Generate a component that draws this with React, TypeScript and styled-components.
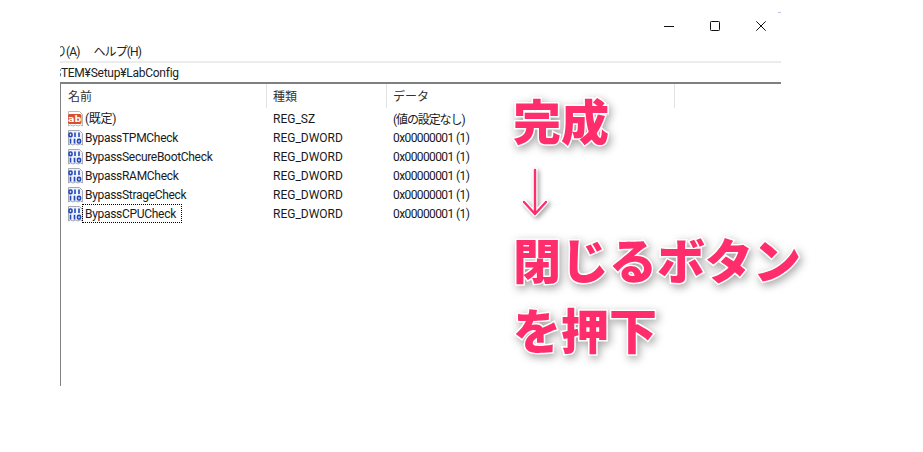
import React from 'react';
import styled, { createGlobalStyle } from 'styled-components';

const GlobalStyle = createGlobalStyle`
  html, body {
    margin: 0;
    padding: 0;
    background: #fff;
  }
`;

const rows = [
  { name: '(既定)', type: 'REG_SZ', data: '(値の設定なし)', kind: 'text' },
  { name: 'BypassTPMCheck', type: 'REG_DWORD', data: '0x00000001 (1)', kind: 'bin' },
  { name: 'BypassSecureBootCheck', type: 'REG_DWORD', data: '0x00000001 (1)', kind: 'bin' },
  { name: 'BypassRAMCheck', type: 'REG_DWORD', data: '0x00000001 (1)', kind: 'bin' },
  { name: 'BypassStrageCheck', type: 'REG_DWORD', data: '0x00000001 (1)', kind: 'bin' },
  { name: 'BypassCPUCheck', type: 'REG_DWORD', data: '0x00000001 (1)', kind: 'bin', focused: true },
];

const TextIcon = () => (
  <svg width="17" height="16" viewBox="0 0 17 16">
    <path d="M1.5 0.5H12.5L15.5 3.5V15L13.5 14L11 15L8.5 14L6 15L3.5 14L1.5 15Z" fill="#fff" stroke="#b8b8b8" />
    <rect x="1" y="3" width="13.5" height="10" rx="1.5" fill="#d8502c" />
    <text x="7.7" y="11.2" textAnchor="middle" fontSize="9.5" fontWeight="700" fontFamily="'DejaVu Sans', sans-serif" fill="#fff">ab</text>
  </svg>
);

const BinIcon = () => (
  <svg width="17" height="16" viewBox="0 0 17 16">
    <path d="M1.5 0.5H12.5L15.5 3.5V15L13.5 14L11 15L8.5 14L6 15L3.5 14L1.5 15Z" fill="#eef2fb" stroke="#a9a9b5" />
    <g fill="none" stroke="#2348b8" strokeWidth="1.6">
      <rect x="2" y="3" width="3" height="3.6" rx="1.2" />
      <path d="M8 2.4V7M12 2.4V7" />
      <path d="M3.5 8.8V13.4M7.5 8.8V13.4" />
      <rect x="10.5" y="9.4" width="3" height="3.6" rx="1.2" />
    </g>
  </svg>
);

export default function App() {
  return (
    <>
      <GlobalStyle />
      <Page>
        <Window>
          <TitleBar>
            <CornerMark />
            <WindowButton aria-label="minimize">
              <svg width="10" height="10" viewBox="0 0 10 10">
                <path d="M0 5.5H10" stroke="#111" strokeWidth="1" />
              </svg>
            </WindowButton>
            <WindowButton aria-label="maximize">
              <svg width="10" height="10" viewBox="0 0 10 10">
                <rect x="0.5" y="0.5" width="9" height="9" rx="0.8" fill="none" stroke="#111" strokeWidth="1" />
              </svg>
            </WindowButton>
            <WindowButton aria-label="close">
              <svg width="10" height="10" viewBox="0 0 10 10">
                <path d="M0.3 0.3L9.7 9.7M9.7 0.3L0.3 9.7" stroke="#111" strokeWidth="1" />
              </svg>
            </WindowButton>
          </TitleBar>
          <MenuBar>
            <ClippedMenuItem>り(A)</ClippedMenuItem>
            <MenuItem>ヘルプ(H)</MenuItem>
          </MenuBar>
          <AddressBar>
            <AddressText>STEM¥Setup¥LabConfig</AddressText>
          </AddressBar>
          <ListPane>
            <HeaderRow>
              <HeaderCell $width={206}>名前</HeaderCell>
              <HeaderCell $width={120}>種類</HeaderCell>
              <HeaderCell $width={288}>データ</HeaderCell>
              <HeaderCell $width={106} $plain />
            </HeaderRow>
            {rows.map((row) => (
              <Row key={row.name}>
                <NameCell>
                  <IconSlot>{row.kind === 'text' ? <TextIcon /> : <BinIcon />}</IconSlot>
                  <NameText $focused={row.focused}>{row.name}</NameText>
                </NameCell>
                <TypeCell>{row.type}</TypeCell>
                <DataCell $cjk={row.kind === 'text'}>{row.data}</DataCell>
              </Row>
            ))}
          </ListPane>
        </Window>
        <Annotation>
          <AnnotationLine>完成</AnnotationLine>
          <ArrowLine>
            <svg width="34" height="52" viewBox="0 0 34 52">
              <path
                d="M17 2V46M6 34L17 46L28 34"
                fill="none"
                stroke="#fff"
                strokeWidth="5"
                strokeLinecap="round"
                strokeLinejoin="round"
              />
              <path
                d="M17 2V46M6 34L17 46L28 34"
                fill="none"
                stroke="#ff2d6b"
                strokeWidth="2.4"
                strokeLinecap="round"
                strokeLinejoin="round"
              />
            </svg>
          </ArrowLine>
          <AnnotationLine>閉じるボタン</AnnotationLine>
          <AnnotationLine>を押下</AnnotationLine>
        </Annotation>
      </Page>
    </>
  );
}

const Page = styled.div`
  position: relative;
  width: 923px;
  height: 452px;
  overflow: hidden;
  background: #fff;
  padding-left: 60px;
  box-sizing: border-box;
  font-family: 'Roboto', 'Noto Sans CJK JP', sans-serif;
  font-size: 12px;
  color: #111;
`;

const Window = styled.div`
  width: 721px;
  height: 386px;
  display: flex;
  flex-direction: column;
`;

const TitleBar = styled.div`
  position: relative;
  height: 42px;
  display: flex;
  justify-content: flex-end;
  align-items: flex-start;
  padding-top: 9px;
  box-sizing: border-box;
`;

const CornerMark = styled.span`
  position: absolute;
  right: 0;
  top: 12px;
  width: 3px;
  height: 1px;
  background: #b9c8da;
`;

const WindowButton = styled.div`
  width: 46px;
  height: 34px;
  display: flex;
  align-items: center;
  justify-content: center;
  &:last-of-type {
    margin-right: -3px;
  }
`;

const MenuBar = styled.div`
  height: 19px;
  display: flex;
  align-items: center;
  gap: 14px;
  overflow: hidden;
  padding-top: 1px;
  box-sizing: border-box;
  line-height: 18px;
  color: #222;
`;

const MenuItem = styled.span`
  white-space: nowrap;
  letter-spacing: -0.9px;
`;

const ClippedMenuItem = styled(MenuItem)`
  margin-left: -5px;
`;

const AddressBar = styled.div`
  height: 19px;
  border-top: 2px solid #ececec;
  line-height: 20px;
  white-space: nowrap;
  overflow: hidden;
  color: #222;
`;

const AddressText = styled.span`
  margin-left: -6px;
  display: inline-block;
  letter-spacing: -0.25px;
`;

const ListPane = styled.div`
  flex: 1;
  border-top: 2px solid #808080;
  border-left: 1px solid #808080;
`;

const HeaderRow = styled.div`
  display: flex;
  height: 24px;
  margin-bottom: 1px;
`;

const HeaderCell = styled.div<{ $width: number; $plain?: boolean }>`
  width: ${(p) => p.$width}px;
  box-sizing: border-box;
  padding-left: 6px;
  border-right: ${(p) => (p.$plain ? 'none' : '1px solid #e3e3e3')};
  line-height: 26px;
  color: #333;
  &:first-child {
    padding-left: 7px;
  }
`;

const Row = styled.div`
  display: flex;
  height: 19px;
  align-items: center;
  white-space: nowrap;
`;

const NameCell = styled.div`
  width: 206px;
  height: 19px;
  display: flex;
  align-items: center;
  padding-left: 6px;
  box-sizing: border-box;
`;

const IconSlot = styled.span`
  width: 17px;
  height: 16px;
  flex: none;
  display: flex;
`;

const NameText = styled.span<{ $focused?: boolean }>`
  height: 19px;
  box-sizing: border-box;
  margin-left: ${(p) => (p.$focused ? '-2px' : '1px')};
  padding: ${(p) => (p.$focused ? '1px 6px 0 3px' : '1px 0 0')};
  line-height: 18px;
  letter-spacing: -0.3px;
  outline: ${(p) => (p.$focused ? '1px dotted #000' : 'none')};
  outline-offset: -1px;
  color: #1a1a1a;
`;

const TypeCell = styled.div`
  width: 120px;
  padding-left: 6px;
  box-sizing: border-box;
  color: #1a1a1a;
`;

const DataCell = styled.div<{ $cjk?: boolean }>`
  padding-left: 6px;
  letter-spacing: ${(p) => (p.$cjk ? '-1.1px' : '-0.6px')};
  color: #1a1a1a;
`;

const Annotation = styled.div`
  position: absolute;
  left: 513px;
  top: 84px;
  display: flex;
  flex-direction: column;
`;

const AnnotationLine = styled.div`
  height: 70px;
  line-height: 70px;
  font-family: 'Noto Sans CJK JP', sans-serif;
  font-weight: 900;
  font-size: 48px;
  white-space: nowrap;
  color: #ff2d6b;
  -webkit-text-stroke: 3px #fff;
  paint-order: stroke fill;
  filter: drop-shadow(2px 3px 4px rgba(0, 0, 0, 0.35));
`;

const ArrowLine = styled.div`
  height: 69px;
  padding-top: 14px;
  padding-left: 5px;
  box-sizing: border-box;
  filter: drop-shadow(2px 2px 2px rgba(0, 0, 0, 0.35));
`;
